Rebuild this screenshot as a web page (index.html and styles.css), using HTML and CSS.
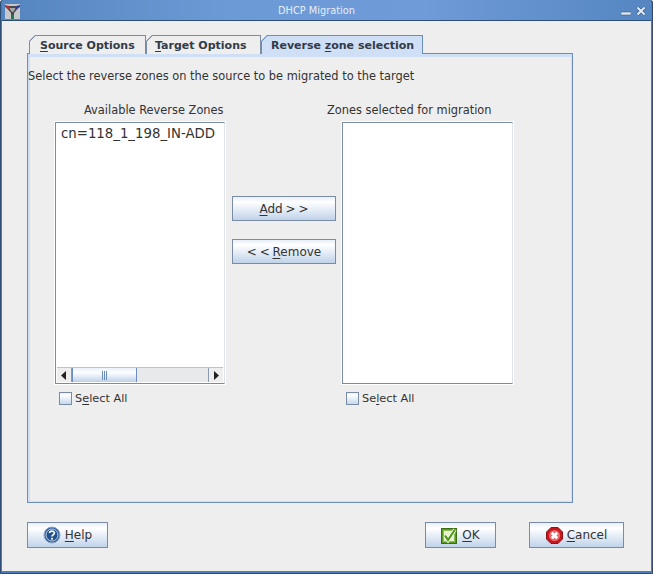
FILE: index.html
```html
<!DOCTYPE html>
<html lang="en">
<head>
    <meta charset="UTF-8">
    <title>DHCP Migration</title>
    <link rel="stylesheet" href="styles.css">
</head>
<body>
    <div class="window">
        <div class="titlebar">
            <svg class="appIcon" width="15" height="15" viewBox="0 0 15 15">
                <rect width="15" height="15" fill="#c6c8cc"/>
                <path d="M0 2 L15 2 L9 9 L9 12 L6 12 L6 9 Z" fill="#4a4a4a"/>
                <path d="M4 4 L11 4 L8 8 L7 8 Z" fill="#a8a8a8"/>
                <path d="M0 1 L4 2 L5 5 L3 5 L0 3 Z" fill="#a8353a"/>
                <path d="M15 1 L11 2 L10 5 L12 5 L15 3 Z" fill="#35408f"/>
                <rect x="6" y="11" width="3" height="4" fill="#1d7a4a"/>
            </svg>
            <span class="title">DHCP Migration</span>
            <div class="winButtons">
                <svg width="10" height="10" viewBox="0 0 10 10"><rect x="0" y="6" width="10" height="3" fill="#dfe8f4" stroke="#3d5f8c" stroke-width="0.6"/></svg>
                <svg width="10" height="10" viewBox="0 0 10 10"><path d="M1.5 1.5 L8.5 8.5 M8.5 1.5 L1.5 8.5" stroke="#3d5f8c" stroke-width="3.4"/><path d="M1.5 1.5 L8.5 8.5 M8.5 1.5 L1.5 8.5" stroke="#e4ecf6" stroke-width="2"/></svg>
            </div>
        </div>
        <div class="content">
            <div class="tabs">
                <div class="tab tabSource"><u>S</u>ource Options</div>
                <div class="tab tabTarget"><u>T</u>arget Options</div>
                <div class="tab tabActive">Reverse <u>z</u>one selection</div>
            </div>
            <div class="panel">
                <p class="intro">Select the reverse zones on the source to be migrated to the target</p>
                <div class="columns">
                    <div class="zoneCol colLeft">
                        <div class="zoneLabel labelLeft">Available Reverse Zones</div>
                        <div class="listBox">
                            <div class="listItems">cn=118_1_198_IN-ADD</div>
                            <div class="scrollbar">
                                <div class="arrow"><svg width="6" height="9" viewBox="0 0 6 9"><path d="M5 0 L0 4.5 L5 9 Z" fill="#222"/></svg></div>
                                <div class="thumb"><span></span><span></span><span></span></div>
                                <div class="track"></div>
                                <div class="arrow"><svg width="6" height="9" viewBox="0 0 6 9"><path d="M1 0 L6 4.5 L1 9 Z" fill="#222"/></svg></div>
                            </div>
                        </div>
                        <label class="check"><span class="box"></span><span>S<u>e</u>lect All</span></label>
                    </div>
                    <div class="moveBtns">
                        <div class="btn moveBtn"><span><u>A</u>dd &gt; &gt;</span></div>
                        <div class="btn moveBtn"><span>&lt; &lt; <u>R</u>emove</span></div>
                    </div>
                    <div class="zoneCol">
                        <div class="zoneLabel labelRight">Zones selected for migration</div>
                        <div class="listBox"></div>
                        <label class="check"><span class="box"></span><span>Se<u>l</u>ect All</span></label>
                    </div>
                </div>
            </div>
            <div class="footer">
                <div class="btn helpBtn">
                    <svg width="18" height="18" viewBox="0 0 18 18">
                        <circle cx="9" cy="9" r="8" fill="#2f5f9e" stroke="#8fa8c8" stroke-width="1"/>
                        <circle cx="9" cy="9" r="6" fill="#24528f" stroke="#dfe8f3" stroke-width="0.8"/>
                        <path d="M6.6 7 C6.6 4.6 11.4 4.6 11.4 7 C11.4 8.6 9 8.6 9 10.6" fill="none" stroke="#fff" stroke-width="1.7"/>
                        <rect x="8.1" y="11.8" width="1.8" height="1.8" fill="#fff"/>
                    </svg>
                    <span><u>H</u>elp</span>
                </div>
                <div class="rightBtns">
                    <div class="btn okBtn">
                        <svg width="17" height="17" viewBox="0 0 17 17">
                            <rect x="0.5" y="1.5" width="15" height="15" fill="#5a9a1c" stroke="#3b6e10"/>
                            <rect x="2.5" y="3.5" width="11" height="11" fill="#e6f2d0" stroke="#8dbb55"/>
                            <path d="M4 8.5 L7 13 L14 2.5" fill="none" stroke="#fff" stroke-width="3.8"/>
                            <path d="M4 8.5 L7 13 L14 2.5" fill="none" stroke="#4d9a10" stroke-width="2.2"/>
                        </svg>
                        <span><u>O</u>K</span>
                    </div>
                    <div class="btn cancelBtn">
                        <svg width="17" height="17" viewBox="0 0 17 17">
                            <path d="M5 0.5 L12 0.5 L16.5 5 L16.5 12 L12 16.5 L5 16.5 L0.5 12 L0.5 5 Z" fill="#c9161d" stroke="#8f1218"/>
                            <circle cx="8.5" cy="8.5" r="5.6" fill="#e9686c"/>
                            <path d="M5.8 5.8 L11.2 11.2 M11.2 5.8 L5.8 11.2" stroke="#fff" stroke-width="2.8"/>
                        </svg>
                        <span><u>C</u>ancel</span>
                    </div>
                </div>
            </div>
        </div>
    </div>
</body>
</html>
```

FILE: styles.css
```css
* {
    box-sizing: border-box;
}
body {
    margin: 0;
    font-family: "DejaVu Sans", sans-serif;
    font-size: 12px;
    color: #333;
    background: #eee;
}
u {
    text-underline-offset: 2px;
}
.window {
    width: 653px;
    height: 574px;
    display: flex;
    flex-direction: column;
    border: 2px solid #4f7cb4;
    border-top: none;
    border-bottom: 3px solid #4f7cb4;
    outline: 1px solid #2d4d75;
    outline-offset: -1px;
    border-radius: 3px 3px 0 0;
    overflow: hidden;
}
.titlebar {
    height: 21px;
    flex: none;
    display: flex;
    align-items: center;
    position: relative;
    padding: 1px 3px 0 4px;
    background: linear-gradient(90deg, #5585bf 0%, #6c9ad6 35%, #6f9bd8 65%, #5586c2 100%);
    border-bottom: 1px solid #2d4d75;
    margin: 0 -1px;
}
.appIcon {
    flex: none;
    margin-top: 2px;
}
.title {
    flex: 1;
    text-align: center;
    font-size: 9.8px;
    color: #e8eef7;
    padding-right: 8px;
}
.winButtons {
    display: flex;
    gap: 5px;
    margin-right: 3px;
}
.content {
    flex: 1;
    width: 649px;
    padding: 14px 78px 0 25px;
    display: flex;
    flex-direction: column;
}
.tabs {
    display: flex;
    height: 19px;
    padding-left: 2px;
    margin-bottom: -1px;
    position: relative;
    z-index: 1;
    flex: none;
}
.tab {
    font-weight: bold;
    font-size: 11px;
    line-height: 14px;
    white-space: nowrap;
    color: #333a48;
    border: 1px solid #7a8ca4;
    border-bottom: none;
    padding: 3px 0 0 10px;
    clip-path: polygon(6px 0, 100% 0, 100% 100%, 0 100%, 0 6px);
    background: linear-gradient(135deg, #7a8ca4 4.2px, #eee 4.2px);
}
.tabSource {
    width: 117px;
}
.tabTarget {
    width: 115px;
    padding-left: 8px;
}
.tabActive {
    width: 162px;
    padding-left: 9px;
    background: linear-gradient(135deg, #6c8ebf 4.2px, #cfdff5 4.2px);
    border-color: #6c8ebf;
}
.panel {
    height: 450px;
    flex: none;
    background: #eee;
    border: 1px solid #6c8ebf;
    box-shadow: inset 2px 3px 0 #cfdff5, inset -1px -1px 0 #cfdff5;
    padding: 15px 0 0 0;
}
.intro {
    margin: 0;
    height: 15px;
    line-height: 15px;
    font-size: 11.4px;
}
.columns {
    display: flex;
    padding: 20px 0 0 27px;
}
.zoneCol {
    width: 171px;
    display: flex;
    flex-direction: column;
}
.colLeft {
    width: 170px;
}
.zoneLabel {
    height: 18px;
    font-size: 11.4px;
    line-height: 13px;
    white-space: nowrap;
}
.labelLeft {
    padding-left: 29px;
}
.labelRight {
    margin-left: -15px;
}
.listBox {
    height: 262px;
    background: #fff;
    border: 1px solid #7a8ca4;
    border-right-color: #dfe4ea;
    outline: 1px solid #fff;
    display: flex;
    flex-direction: column;
    font-size: 13.3px;
}
.listItems {
    flex: 1;
    padding: 3px 0 0 5px;
    white-space: nowrap;
    overflow: hidden;
}
.scrollbar {
    height: 15px;
    margin: 0 1px 1px 1px;
    background: #e8e9ea;
    border-top: 1px solid #b8c4d4;
    display: flex;
}
.arrow {
    width: 15px;
    background: #eee;
    display: flex;
    align-items: center;
    justify-content: center;
    border-right: 1px solid #8a9bb0;
}
.arrow:last-child {
    border-right: none;
    border-left: 1px solid #8a9bb0;
}
.thumb {
    width: 65px;
    background: linear-gradient(#eaf1fa, #fdfdff 35%, #bcd0e8);
    border-left: 1px solid #6c8ebf;
    border-right: 1px solid #6c8ebf;
    display: flex;
    align-items: center;
    justify-content: center;
    gap: 1px;
}
.thumb span {
    width: 1px;
    height: 9px;
    background: #6c8ebf;
}
.track {
    flex: 1;
}
.check {
    display: flex;
    align-items: center;
    gap: 3px;
    margin: 7px 0 0 4px;
    height: 15px;
    font-size: 11.3px;
}
.box {
    width: 13px;
    height: 13px;
    border: 1px solid #7a8ca4;
    background: linear-gradient(#e6eef8, #fff 20%, #c5d7ee);
}
.btn {
    border: 1px solid #7a8ca4;
    background: linear-gradient(#e8eff9, #fff 22%, #c0d3ea);
    display: flex;
    align-items: center;
    justify-content: center;
    font-size: 12px;
}
.moveBtn span {
    word-spacing: -1px;
}
.moveBtns {
    width: 104px;
    margin: 74px 6px 0 7px;
    padding-top: 18px;
    flex: none;
    display: flex;
    flex-direction: column;
    gap: 18px;
}
.moveBtn {
    height: 25px;
}
.footer {
    display: flex;
    justify-content: space-between;
    margin-top: 19px;
    width: 597px;
}
.helpBtn,
.okBtn,
.cancelBtn {
    height: 26px;
    gap: 4px;
}
.helpBtn {
    width: 81px;
}
.rightBtns {
    display: flex;
    gap: 33px;
}
.okBtn {
    width: 71px;
}
.cancelBtn {
    width: 95px;
}
```
